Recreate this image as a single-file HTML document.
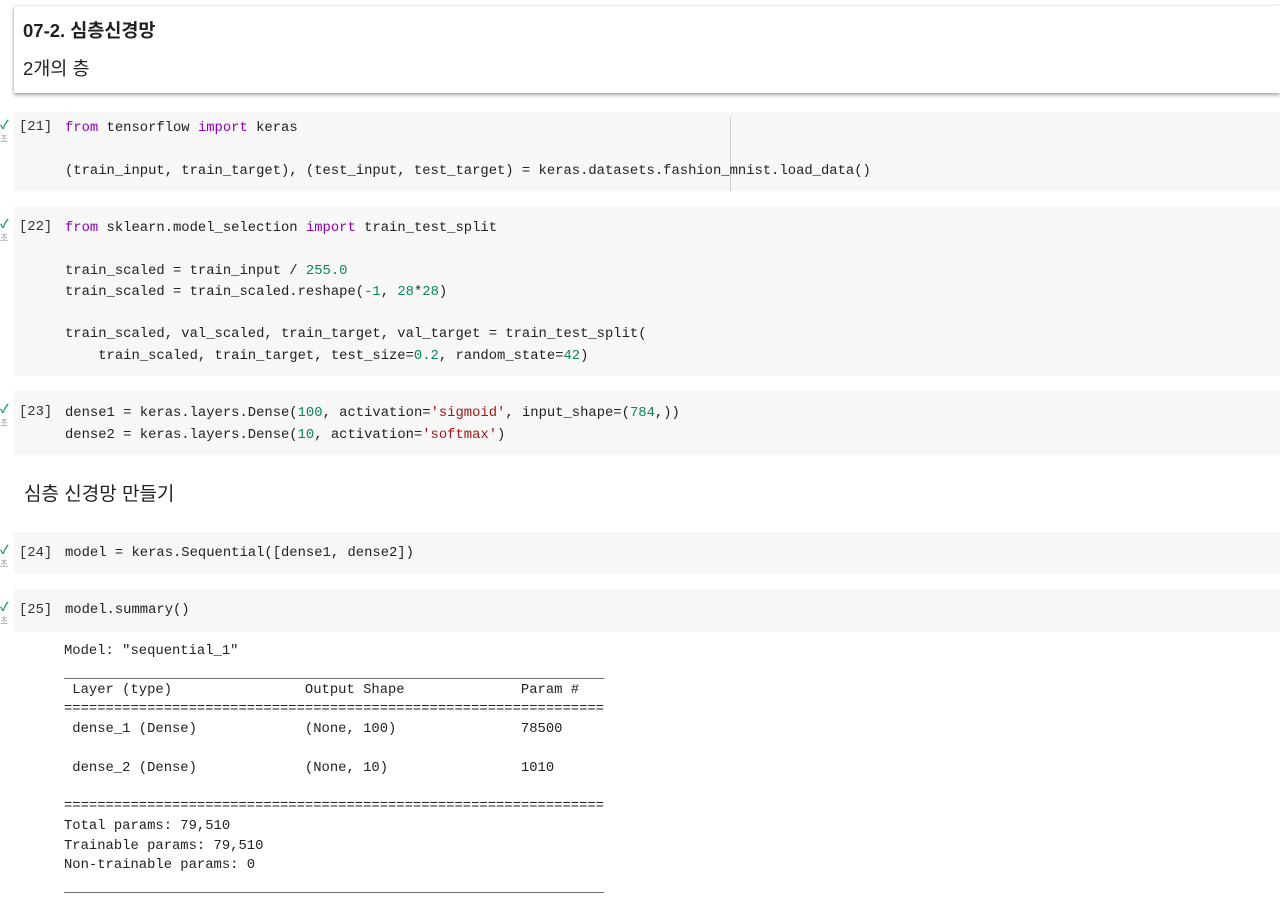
<!DOCTYPE html>
<html><head><meta charset="utf-8"><style>
body{margin:0;width:1280px;height:909px;background:#fff;position:relative;overflow:hidden;font-family:"Liberation Sans","Noto Sans CJK KR",sans-serif;color:#212121}
.card{position:absolute;left:14px;top:6px;width:1266px;height:87px;background:#fff;box-shadow:0 2px 4px rgba(0,0,0,.35),0 0 2px rgba(0,0,0,.15)}
.cell{position:absolute;left:14px;width:1266px;background:#f7f7f7}
.m{font-family:"Liberation Mono","Noto Sans CJK KR",monospace;font-size:13.85px;white-space:pre;position:absolute;color:#212121}
.k{color:#8f00b8}.n{color:#098658}.s{color:#a31515}
.num{left:19px;color:#333}
.ck{position:absolute;left:0;width:10px;font-size:12px;font-weight:bold;color:#1aa260}
.ch{position:absolute;left:0;font-size:9px;color:#999}
.o{left:64px;font-size:13.85px}
</style></head><body>
<div class="card"></div>
<div style="position:absolute;left:23px;top:17px;font-size:18.5px;font-weight:bold">07-2. 심층신경망</div>
<div style="position:absolute;left:23px;top:55px;font-size:18.5px">2개의 층</div>

<div class="cell" style="top:112px;height:79px"></div>
<div style="position:absolute;left:730px;top:117px;width:1px;height:74px;background:#ccc"></div>
<div class="cell" style="top:206px;height:170px"></div>
<div class="cell" style="top:391px;height:64px"></div>
<div class="cell" style="top:532px;height:42px"></div>
<div class="cell" style="top:589px;height:43px"></div>

<div class="ck" style="top:116px">✓</div><div class="ch" style="top:132px">초</div>
<div class="ck" style="top:215px">✓</div><div class="ch" style="top:231px">초</div>
<div class="ck" style="top:400px">✓</div><div class="ch" style="top:416px">초</div>
<div class="ck" style="top:541px">✓</div><div class="ch" style="top:557px">초</div>
<div class="ck" style="top:598px">✓</div><div class="ch" style="top:614px">초</div>

<div class="m num" style="top:119px">[21]</div>
<div class="m" style="left:65px;top:118px;line-height:21.3px"><span class="k">from</span> tensorflow <span class="k">import</span> keras

(train_input, train_target), (test_input, test_target) = keras.datasets.fashion_mnist.load_data()</div>

<div class="m num" style="top:219px">[22]</div>
<div class="m" style="left:65px;top:218px;line-height:21.3px"><span class="k">from</span> sklearn.model_selection <span class="k">import</span> train_test_split

train_scaled = train_input / <span class="n">255.0</span>
train_scaled = train_scaled.reshape(<span class="n">-1</span>, <span class="n">28</span>*<span class="n">28</span>)

train_scaled, val_scaled, train_target, val_target = train_test_split(
    train_scaled, train_target, test_size=<span class="n">0.2</span>, random_state=<span class="n">42</span>)</div>

<div class="m num" style="top:404px">[23]</div>
<div class="m" style="left:65px;top:403px;line-height:21.8px">dense1 = keras.layers.Dense(<span class="n">100</span>, activation=<span class="s">'sigmoid'</span>, input_shape=(<span class="n">784</span>,))
dense2 = keras.layers.Dense(<span class="n">10</span>, activation=<span class="s">'softmax'</span>)</div>

<div style="position:absolute;left:24px;top:479px;font-size:19px">심층 신경망 만들기</div>

<div class="m num" style="top:545px">[24]</div>
<div class="m" style="left:65px;top:545px">model = keras.Sequential([dense1, dense2])</div>

<div class="m num" style="top:602px">[25]</div>
<div class="m" style="left:65px;top:602px">model.summary()</div>

<div class="m o" style="top:643px">Model: "sequential_1"</div>
<div class="m o" style="top:666px">_________________________________________________________________</div>
<div class="m o" style="top:682px"> Layer (type)                Output Shape              Param #   </div>
<div class="m o" style="top:701px">=================================================================</div>
<div class="m o" style="top:721px"> dense_1 (Dense)             (None, 100)               78500     </div>
<div class="m o" style="top:760px"> dense_2 (Dense)             (None, 10)                1010      </div>
<div class="m o" style="top:798px">=================================================================</div>
<div class="m o" style="top:818px">Total params: 79,510</div>
<div class="m o" style="top:838px">Trainable params: 79,510</div>
<div class="m o" style="top:857px">Non-trainable params: 0</div>
<div class="m o" style="top:880px">_________________________________________________________________</div>
</body></html>
